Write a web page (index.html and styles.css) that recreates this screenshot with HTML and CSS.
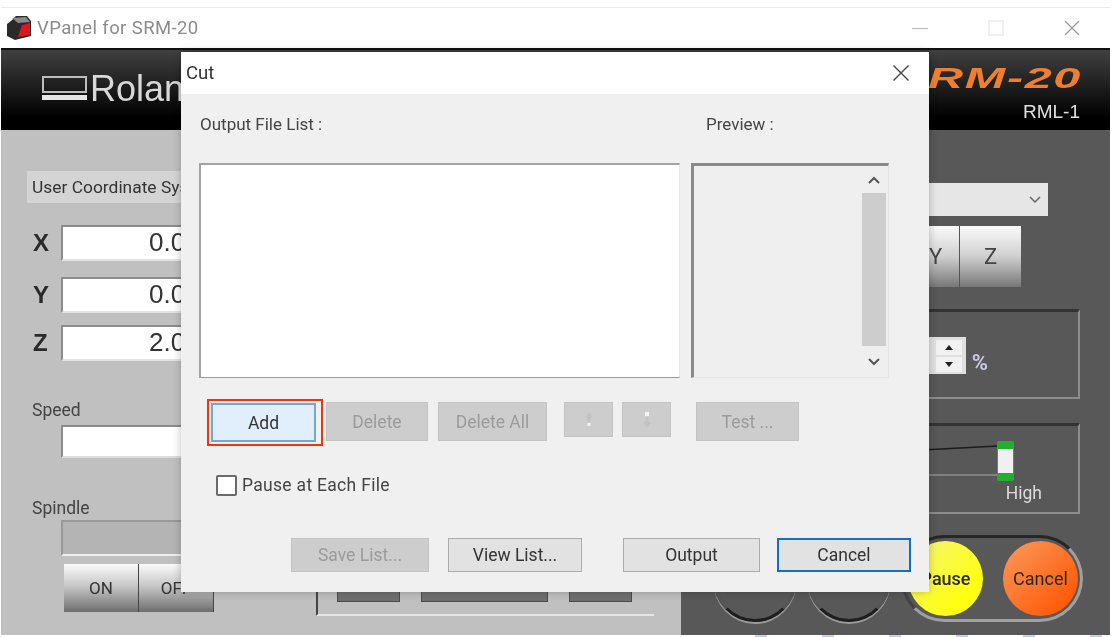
FILE: index.html
```html
<!DOCTYPE html>
<html lang="en">
<head>
  <meta charset="UTF-8" />
  <title>VPanel for SRM-20</title>
  <link rel="stylesheet" href="styles.css">
</head>
<body>
  <div class="window">
    <div class="titlebar">
      <svg class="app-icon" width="26" height="26" viewBox="0 0 26 26">
        <path d="M5 6 L10 1 L21 1 L25 6 L25 21 L9 25 L1 21 L1 9 Z" fill="#2a2a2a"/>
        <path d="M6 3 L20 2 L24 7 L12 8 Z" fill="#8a8a8a"/>
        <path d="M12 22 L16 10 L24 8 L24 20 Z" fill="#e0141a"/>
      </svg>
      <span class="app-title">VPanel for SRM-20</span>
      <div class="win-controls">
        <svg width="16" height="16" viewBox="0 0 16 16"><path d="M0 8.5 H16" stroke="#bbb" stroke-width="1.2"/></svg>
        <svg width="16" height="16" viewBox="0 0 16 16"><rect x="1" y="1" width="14" height="14" fill="none" stroke="#e6e6e6" stroke-width="1.2"/></svg>
        <svg width="16" height="16" viewBox="0 0 16 16"><path d="M1 1 L15 15 M15 1 L1 15" stroke="#999" stroke-width="1.2"/></svg>
      </div>
    </div>

    <div class="brand">
      <div class="logo">
        <svg width="45" height="25" viewBox="0 0 45 25">
          <rect x="1" y="1" width="43" height="15" fill="none" stroke="#bdbdbd" stroke-width="2"/>
          <rect x="0" y="19" width="45" height="5" fill="#e6e6e6"/>
        </svg>
        <span class="logo-text">Rolan</span>
      </div>
      <div class="model">
        <span class="model-name">SRM-20</span>
        <span class="model-sub">RML-1</span>
      </div>
    </div>

    <div class="panels">
      <div class="left">
        <div class="axes">
          <div class="coord-select">User Coordinate System</div>
          <div class="coord-list">
            <div class="coord-row"><b>X</b><div class="coord-field">0.00 mm</div></div>
            <div class="coord-row row-y"><b>Y</b><div class="coord-field">0.00 mm</div></div>
            <div class="coord-row"><b>Z</b><div class="coord-field">2.00 mm</div></div>
          </div>
          <div class="side-label speed-label">Speed</div>
          <div class="side-field speed-field"></div>
          <div class="side-label spindle-label">Spindle</div>
          <div class="side-field spindle-field"></div>
          <div class="toggle">
            <button>ON</button>
            <button>OFF</button>
          </div>
        </div>
        <div class="jog-box">
          <span class="jog-btn"></span>
          <span class="jog-btn wide"></span>
          <span class="jog-btn"></span>
        </div>
      </div>

      <div class="right">
        <div class="origin-select">
          <svg width="12" height="8" viewBox="0 0 12 8"><path d="M1 1 L6 6 L11 1" fill="none" stroke="#666" stroke-width="1.5"/></svg>
        </div>
        <div class="xyz">
          <button>X</button>
          <button class="xyz-y">Y</button>
          <button>Z</button>
        </div>
        <div class="group feed-box">
          <div class="spinner">
            <span class="spin-up"></span>
            <span class="spin-down"></span>
          </div>
          <span class="percent">%</span>
        </div>
        <div class="group speed-box">
          <svg width="300" height="40" viewBox="0 0 300 40">
            <path d="M0 20 L284 5" stroke="#1c1c1c" stroke-width="1.6"/>
            <path d="M0 34 H284" stroke="#8e8e8e" stroke-width="1.6"/>
            <rect x="283" y="0" width="17" height="40" rx="2" fill="#1fb02e"/>
            <rect x="284" y="8" width="15" height="24" fill="#f0f0f0"/>
          </svg>
          <span class="high">High</span>
        </div>
        <div class="lamps">
          <span class="ring"></span>
          <span class="ring"></span>
          <div class="pill">
            <span class="lamp pause">Pause</span>
            <span class="lamp cancel">Cancel</span>
          </div>
        </div>
      </div>
    </div>

    <div class="dialog">
      <div class="dialog-title">
        <span>Cut</span>
        <svg width="18" height="18" viewBox="0 0 18 18"><path d="M1.5 1.5 L16.5 16.5 M16.5 1.5 L1.5 16.5" stroke="#444" stroke-width="1.4"/></svg>
      </div>
      <div class="dialog-body">
        <div class="list-grid">
          <div class="output-label">Output File List :</div>
          <div class="preview-label">Preview :</div>
          <div class="file-list"></div>
          <div class="preview-list">
            <div class="scrollbar">
              <svg width="12" height="8" viewBox="0 0 12 8"><path d="M1 7 L6 2 L11 7" fill="none" stroke="#555" stroke-width="2"/></svg>
              <div class="scroll-thumb"></div>
              <svg width="12" height="8" viewBox="0 0 12 8"><path d="M1 1 L6 6 L11 1" fill="none" stroke="#555" stroke-width="2"/></svg>
            </div>
          </div>
        </div>

        <div class="list-actions">
          <div class="add-mark"><button class="btn add">Add</button></div>
          <button class="btn off delete">Delete</button>
          <button class="btn off delete-all">Delete All</button>
          <button class="btn off arrow up">
            <svg width="10" height="18" viewBox="0 0 10 18"><path d="M5 1 L9 7 H6.5 V11 H3.5 V7 H1 Z" fill="#c3c3c3"/><rect x="3.5" y="12" width="3" height="3" fill="#f4f4f4"/></svg>
          </button>
          <button class="btn off arrow down">
            <svg width="10" height="18" viewBox="0 0 10 18"><rect x="3" y="1" width="4" height="4" fill="#f4f4f4"/><path d="M3.5 6 H6.5 V11 H9 L5 17 L1 11 H3.5 Z" fill="#c3c3c3"/></svg>
          </button>
          <button class="btn off test">Test ...</button>
        </div>

        <label class="pause-check"><span class="checkbox"></span>Pause at Each File</label>

        <div class="dialog-footer">
          <button class="btn off save">Save List...</button>
          <button class="btn plain view">View List...</button>
          <button class="btn plain output">Output</button>
          <button class="btn plain cancel-btn">Cancel</button>
        </div>
      </div>
    </div>
  </div>

  <div class="under-strip">
    <span></span><span></span><span></span><span></span><span></span><span></span>
  </div>
</body>
</html>
```

FILE: styles.css
```css
* { box-sizing: border-box; }
html, body { margin: 0; height: 637px; overflow: hidden; background: #fff; }
body { font-family: Roboto, "Liberation Sans", sans-serif; color: #333; }
button { font-family: inherit; margin: 0; padding: 0; }

.window { position: relative; width: 1109px; height: 635px; margin-left: 1px; padding-top: 7px; filter: blur(0.6px); }

/* title bar */
.titlebar { display: flex; align-items: center; height: 41px; padding: 0 30px 0 5px; border-top: 1px solid #ececec; background: #fff; }
.app-title { margin-left: 5px; font-size: 18.5px; letter-spacing: 0.4px; color: #8c8c8c; }
.win-controls { display: flex; gap: 60px; margin-left: auto; }

/* black header */
.brand { display: flex; justify-content: space-between; height: 82px; padding: 0 28px 0 41px; background: linear-gradient(#404040, #000 85%); border-top: 2px solid #111; }
.logo { display: flex; align-items: center; gap: 3px; padding-bottom: 3px; }
.logo svg { flex: none; }
.logo-text { font-family: "Liberation Sans", sans-serif; font-size: 36px; color: #d8d8d8; }
.model { display: flex; flex-direction: column; align-items: flex-end; padding-top: 12px; }
.model-name { font-family: "Liberation Sans", sans-serif; font-size: 30px; line-height: 32px; font-weight: bold; font-style: italic; color: #ee7f2e; transform: scaleX(1.62); transform-origin: right center; letter-spacing: 1px; }
.model-sub { margin-top: 8px; padding-right: 2px; font-family: "Liberation Sans", sans-serif; font-size: 19px; line-height: 20px; color: #e0e0e0; }

.panels { display: grid; grid-template-columns: 680px 429px; height: 505px; }

/* left side */
.left { display: grid; grid-template-columns: 315px 338px; background: #c0c0c0; }
.axes { padding: 41px 0 0 26px; }
.coord-select { width: 200px; height: 32px; padding-left: 5px; background: #d4d4d4; font-size: 17.4px; line-height: 32px; white-space: nowrap; }
.coord-list { margin-top: 22px; }
.coord-row { display: flex; align-items: center; height: 36px; }
.coord-row b { width: 34px; padding-left: 6px; font-family: "Liberation Sans", sans-serif; font-size: 24px; color: #2a2a2a; }
.row-y { margin: 16px 0 12px; }
.coord-field { width: 190px; height: 36px; padding-left: 86px; background: #fff; border-top: 2px solid #8c8c8c; border-left: 2px solid #8c8c8c; border-bottom: 2px solid #e2e2e2; font-family: "Liberation Sans", sans-serif; font-size: 26px; line-height: 30px; white-space: nowrap; }
.side-label { margin-left: 5px; font-size: 17.5px; line-height: 18px; color: #444; }
.speed-label { margin-top: 40px; }
.spindle-label { margin-top: 41px; }
.side-field { width: 190px; margin-left: 34px; }
.speed-field { height: 33px; margin-top: 6px; background: #fff; border-top: 2px solid #8c8c8c; border-left: 2px solid #8c8c8c; border-bottom: 2px solid #dcdcdc; }
.spindle-field { height: 36px; margin-top: 3px; background: #b4b4b4; border-top: 2px solid #999; border-left: 2px solid #999; border-bottom: 2px solid #efefef; }
.toggle { display: flex; width: 150px; margin: 8px 0 0 37px; }
.toggle button { width: 75px; height: 48px; border: 0; border-right: 1px solid #444; background: linear-gradient(#fafafa, #c8c8c8 45%, #6e6e6e); font-size: 17px; color: #333; }
.jog-box { display: flex; align-items: flex-end; gap: 21px; align-self: end; height: 120px; margin-bottom: 19px; padding: 0 0 12px 19px; border-left: 2px solid #444; border-bottom: 2px solid #e6e6e6; }
.jog-btn { width: 63px; height: 60px; background: #6f6f6f; border: 1px solid #4a4a4a; }
.jog-btn.wide { width: 127px; }

/* right side */
.right { padding-top: 53px; background: #585858; }
.origin-select { display: flex; align-items: center; justify-content: flex-end; width: 340px; height: 33px; margin-left: 27px; padding-right: 7px; background: #e6e6e6; }
.xyz { display: flex; justify-content: flex-end; height: 61px; margin: 10px 89px 0 0; }
.xyz button { width: 62px; border: 0; border-left: 1px solid #555; background: linear-gradient(#fafafa, #cfcfcf 50%, #777); font-size: 22px; color: #444; }
.xyz .xyz-y { padding-left: 14px; }
.group { width: 380px; margin-left: 19px; border-top: 3px solid #333; border-right: 2px solid #8c8c8c; border-bottom: 2px solid #8c8c8c; }
.feed-box { display: flex; align-items: flex-end; justify-content: flex-end; height: 90px; margin-top: 22px; padding: 0 90px 23px 0; }
.spinner { display: flex; flex-direction: column; justify-content: center; gap: 2px; width: 37px; height: 37px; padding: 0 4px 0 7px; background: #e0e0e0; }
.spin-up, .spin-down { position: relative; display: flex; align-items: center; justify-content: center; height: 15px; background: #f2f2f2; }
.spin-up::after { content: ""; border: 4px solid transparent; border-top: 0; border-bottom: 5px solid #222; }
.spin-down::after { content: ""; border: 4px solid transparent; border-bottom: 0; border-top: 5px solid #222; }
.percent { margin-left: 6px; font-size: 22px; line-height: 22px; font-weight: bold; color: #c3c8dc; }
.speed-box { display: flex; flex-direction: column; align-items: flex-end; height: 91px; margin-top: 24px; padding: 15px 36px 0 0; }
.speed-box svg { display: block; margin-right: 28px; }
.high { margin-top: 3px; font-size: 17.5px; line-height: 18px; color: #dcdcdc; }
.lamps { display: flex; align-items: center; justify-content: flex-end; gap: 10px; height: 87px; margin: 21px 27px 0 0; }
.ring { width: 84px; height: 87px; border-radius: 50%; border: 3px solid #555; border-bottom-color: #1e1e1e; box-shadow: 0 2px 0 #9a9a9a; }
.pill { display: flex; align-items: center; justify-content: space-between; width: 182px; height: 87px; padding: 0 2px 0 4px; border: 3px solid #262626; border-right-color: #a0a0a0; border-bottom-color: #a0a0a0; border-left-color: #444; border-radius: 44px; }
.lamp { display: flex; align-items: center; justify-content: center; width: 75px; height: 75px; border-radius: 50%; font-size: 18px; color: #2a2a14; }
.pause { background: linear-gradient(135deg, #f4f47a, #ffff10 75%); font-weight: 500; }
.cancel { background: linear-gradient(135deg, #fb9a5c, #ff5a08 85%); }

/* Cut dialog, sits over the panel */
.dialog { position: absolute; left: 180px; top: 52px; width: 748px; height: 540px; background: #f0f0f0; box-shadow: 0 0 8px rgba(0, 0, 0, 0.25); }
.dialog-title { display: flex; align-items: center; justify-content: space-between; height: 42px; padding: 0 19px 0 5px; background: #fff; font-size: 18.5px; color: #333; }
.dialog-body { padding: 21px 0 0 18px; font-size: 17px; }
.list-grid { display: grid; grid-template-columns: 481px 198px; grid-template-rows: 18px 215px; row-gap: 30px; column-gap: 11px; }
.output-label, .preview-label { line-height: 18px; color: #444; white-space: nowrap; }
.output-label { padding-left: 1px; }
.preview-label { padding-left: 15px; }
.file-list { background: #fff; border: 1px solid #a4a4a4; border-top-width: 2px; border-left-width: 2px; border-right-color: #e4e4e4; border-bottom-color: #9c9c9c; }
.preview-list { display: flex; justify-content: flex-end; padding: 0 1px 0 0; background: #efefef; border-top: 3px solid #8a8a8a; border-left: 3px solid #8a8a8a; border-right: 1px solid #e4e4e4; border-bottom: 1px solid #e4e4e4; }
.scrollbar { display: flex; flex-direction: column; align-items: center; justify-content: space-between; width: 26px; padding: 10px 0; }
.scroll-thumb { width: 24px; height: 153px; margin: 9px 0 auto; background: #cdcdcd; }
.scrollbar svg:last-child { margin-bottom: 1px; }

.list-actions { display: flex; align-items: flex-start; margin: 21px 0 0 8px; }
.btn { display: flex; align-items: center; justify-content: center; height: 39px; font-size: 17.5px; border: 1px solid #c2c2c2; white-space: nowrap; }
.btn.off { background: #cdcdcd; color: #9b9b9b; border-color: #c4c4c4; }
.btn.plain { background: #e2e2e2; color: #333; border-color: #acacac; }
.add-mark { padding: 2px 5px 2px 2px; border: 2px solid #f03412; }
.btn.add { width: 105px; background: #e1effc; border: 2px solid #74a8d4; color: #333; }
.list-actions .off { margin-top: 3px; }
.delete { width: 102px; margin-left: 3px; }
.delete-all { width: 109px; margin-left: 10px; }
.arrow { width: 49px; height: 35px !important; }
.up { margin-left: 17px; }
.down { margin-left: 9px; }
.test { width: 103px; margin-left: 25px; }

.pause-check { display: flex; align-items: center; gap: 5px; height: 22px; margin: 28px 0 0 17px; font-size: 17.5px; letter-spacing: 0.3px; color: #444; }
.checkbox { width: 21px; height: 21px; background: #fff; border: 2px solid #6a6a6a; border-radius: 2px; }

.dialog-footer { display: flex; margin: 42px 0 0 92px; }
.dialog-footer .btn { height: 34px; }
.save { width: 138px; }
.view { width: 134px; margin-left: 19px; }
.output { width: 137px; margin-left: 41px; }
.btn.cancel-btn { width: 134px; margin-left: 17px; border: 2px solid #1071c4; }

/* bits of the page below the window */
.under-strip { display: flex; gap: 55px; height: 2px; padding-left: 755px; }
.under-strip span { width: 12px; background: #c5cdf0; }
```
